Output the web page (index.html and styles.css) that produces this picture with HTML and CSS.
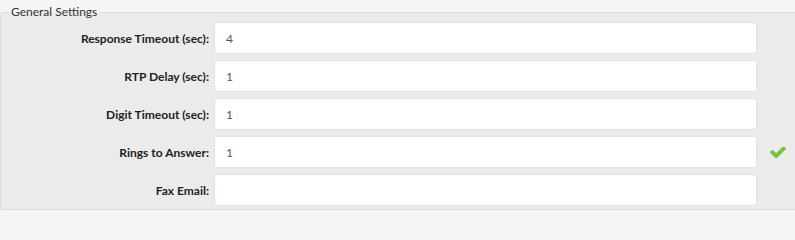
FILE: index.html
```html
<!DOCTYPE html>
<html lang="en">
<head>
<meta charset="utf-8">
<title>General Settings</title>
<link rel="stylesheet" href="styles.css">
</head>
<body>
<fieldset class="settings">
  <legend class="settings-legend">General Settings</legend>
  <div class="form-grid">
    <label class="field-label" for="rt">Response Timeout (sec):</label>
    <input class="field-input" id="rt" type="text" value="4">
    <span class="field-status"></span>

    <label class="field-label" for="rtp">RTP Delay (sec):</label>
    <input class="field-input" id="rtp" type="text" value="1">
    <span class="field-status"></span>

    <label class="field-label" for="dt">Digit Timeout (sec):</label>
    <input class="field-input" id="dt" type="text" value="1">
    <span class="field-status"></span>

    <label class="field-label" for="rta">Rings to Answer:</label>
    <input class="field-input" id="rta" type="text" value="1">
    <span class="field-status">
      <svg class="check-icon" viewBox="115 430 1556 1028" width="16" height="11" aria-hidden="true"><path d="M1671 566q0 40-28 68l-724 724-136 136q-28 28-68 28t-68-28l-136-136-362-362q-28-28-28-68t28-68l136-136q28-28 68-28t68 28l294 295 656-657q28-28 68-28t68 28l136 136q28 28 28 68z"/></svg>
    </span>

    <label class="field-label" for="fax">Fax Email:</label>
    <input class="field-input" id="fax" type="text" value="">
    <span class="field-status"></span>
  </div>
</fieldset>
</body>
</html>
```
FILE: styles.css
```css
html, body {
  margin: 0;
  padding: 0;
  background: #f5f5f5;
  font-family: Lato, "Open Sans", sans-serif;
  color: #333;
}

.settings {
  margin: 0 -10px 0 0;
  padding: 0 0 3px 0;
  background: #ebebeb;
  border: 1px solid #dcdcdc;
  border-radius: 3px;
  min-width: 0;
}

.settings-legend {
  margin-left: 8px;
  padding: 0 2px;
  font-size: 12px;
  line-height: 24px;
  color: #333;
}

.form-grid {
  margin-top: -2px;
  display: grid;
  grid-template-columns: 208px 543px 1fr;
  column-gap: 5px;
  row-gap: 6px;
  align-items: center;
}

.field-label {
  text-align: right;
  font-weight: bold;
  font-size: 12px;
  color: #222;
}

.field-input {
  box-sizing: border-box;
  height: 32px;
  width: 543px;
  margin: 0;
  padding: 0 11px;
  background: #fff;
  border: 1px solid #e2e2e2;
  border-radius: 3px;
  font-family: Lato, "Open Sans", sans-serif;
  font-size: 12px;
  color: #555;
  outline: none;
}

.field-status {
  display: flex;
  align-items: center;
  padding-left: 8px;
}

.check-icon {
  fill: #7bc142;
  display: block;
}
```
